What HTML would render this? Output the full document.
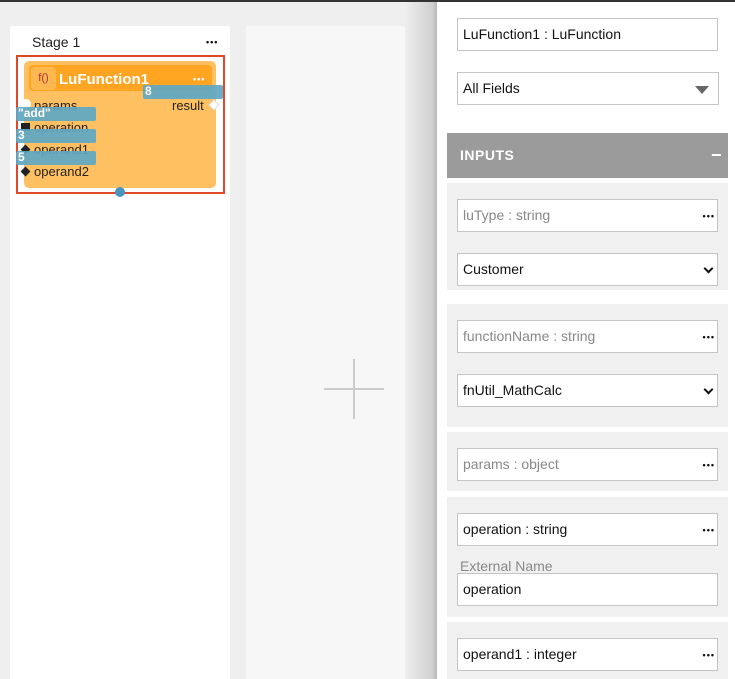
<!DOCTYPE html>
<html><head><style>
*{box-sizing:border-box;margin:0;padding:0}
body{width:735px;height:679px;overflow:hidden;background:#efefef;font-family:"Liberation Sans",Arial,sans-serif;position:relative}
.a{position:absolute}
.inp{position:absolute;left:457px;width:261px;height:33px;background:#fff;border:1px solid #c4c4c4;font-size:14px;line-height:31px;padding-left:5px;color:#111}
.g{color:#888}
.dots{position:absolute;right:2px;top:1px;font-size:9px;font-weight:bold;letter-spacing:1px;color:#111}
.sec{position:absolute;left:447px;width:281px;background:#f0f0f0}
.chev{position:absolute;right:5px;top:11px;width:7px;height:7px;border-right:2px solid #111;border-bottom:2px solid #111;transform:rotate(45deg)}
.tag{position:absolute;background:#5fa8c4;opacity:.92;color:#fff;font-size:12px;font-weight:bold;line-height:13px;padding-left:2px;border-radius:2px}
.pl{position:absolute;font-size:13px;color:#222}
</style></head><body>
<div class="a" style="left:0;top:0;width:735px;height:2px;background:#333"></div>
<div class="a" style="left:10px;top:26px;width:220px;height:653px;background:#fff"></div>
<div class="a" style="left:246px;top:26px;width:159px;height:653px;background:#f7f7f7"></div>
<div class="a" style="left:405px;top:2px;width:32px;height:677px;background:linear-gradient(to right,#efefef,#d0d0d0 85%,#b8b8b8)"></div>
<div class="a" style="left:437px;top:2px;width:298px;height:677px;background:#fff"></div>
<div class="a" style="left:324px;top:388px;width:60px;height:2px;background:#ccc"></div>
<div class="a" style="left:353px;top:359px;width:2px;height:60px;background:#ccc"></div>
<div class="a" style="left:32px;top:34px;font-size:14px;color:#222">Stage 1</div>
<div class="a" style="left:206px;top:37px;font-size:9px;font-weight:bold;letter-spacing:1px;color:#111">•••</div>
<div class="a" style="left:16px;top:55px;width:209px;height:139px;border:2px solid #e0482a"></div>
<div class="a" style="left:24px;top:61px;width:192px;height:127px;background:#ffc062;border-radius:5px"></div>
<div class="a" style="left:29px;top:65px;width:183px;height:26px;background:#ffa522;border-radius:4px"></div>
<div class="a" style="left:31px;top:67px;width:25px;height:23px;background:#ffb750;border-radius:4px;font-size:11px;color:#a34;line-height:23px;text-align:center">f()</div>
<div class="a" style="left:59px;top:71px;font-size:15px;font-weight:bold;color:#fff">LuFunction1</div>
<div class="a" style="left:193px;top:74px;font-size:9px;font-weight:bold;letter-spacing:1px;color:#fff">•••</div>
<div class="a" style="left:21px;top:99px;width:10px;height:10px;border-radius:50%;background:#fff"></div>
<div class="pl" style="left:34px;top:98px">params</div>
<div class="pl" style="left:172px;top:98px">result</div>
<div class="a" style="left:210px;top:101px;width:8px;height:8px;background:#fff;border:1px solid #ddd;transform:rotate(45deg)"></div>
<div class="pl" style="left:34px;top:120px">operation</div>
<div class="a" style="left:21px;top:123px;width:9px;height:8px;background:#222"></div>
<div class="pl" style="left:34px;top:142px">operand1</div>
<div class="a" style="left:22px;top:146px;width:7px;height:7px;background:#222;transform:rotate(45deg)"></div>
<div class="pl" style="left:34px;top:164px">operand2</div>
<div class="a" style="left:22px;top:168px;width:7px;height:7px;background:#222;transform:rotate(45deg)"></div>
<div class="tag" style="left:143px;top:85px;width:80px;height:14px">8</div>
<div class="tag" style="left:16px;top:107px;width:80px;height:14px">"add"</div>
<div class="tag" style="left:16px;top:129px;width:80px;height:14px">3</div>
<div class="tag" style="left:16px;top:151px;width:80px;height:14px">5</div>
<div class="a" style="left:115px;top:187px;width:10px;height:10px;border-radius:50%;background:#4a94c0"></div>
<div class="inp" style="top:18px;height:33px">LuFunction1 : LuFunction</div>
<div class="inp" style="top:72px;width:262px">All Fields<div class="a" style="right:9px;top:13px;width:0;height:0;border-left:7px solid transparent;border-right:7px solid transparent;border-top:8px solid #666"></div></div>
<div class="a" style="left:447px;top:133px;width:281px;height:45px;background:#9b9b9b;color:#fff;font-weight:bold;font-size:14px;line-height:45px;padding-left:13px;letter-spacing:.5px">INPUTS<span style="position:absolute;right:6px;font-size:18px">−</span></div>
<div class="sec" style="top:183px;height:107px"></div>
<div class="inp g" style="top:199px">luType : string<span class="dots">•••</span></div>
<div class="inp" style="top:253px">Customer<span class="chev"></span></div>
<div class="sec" style="top:304px;height:123px"></div>
<div class="inp g" style="top:320px">functionName : string<span class="dots">•••</span></div>
<div class="inp" style="top:374px">fnUtil_MathCalc<span class="chev"></span></div>
<div class="sec" style="top:432px;height:59px"></div>
<div class="inp g" style="top:448px">params : object<span class="dots">•••</span></div>
<div class="sec" style="top:497px;height:120px"></div>
<div class="inp" style="top:513px">operation : string<span class="dots">•••</span></div>
<div class="a" style="left:460px;top:558px;font-size:14px;color:#888">External Name</div>
<div class="inp" style="top:573px">operation</div>
<div class="sec" style="top:622px;height:57px"></div>
<div class="inp" style="top:638px">operand1 : integer<span class="dots">•••</span></div>
</body></html>
